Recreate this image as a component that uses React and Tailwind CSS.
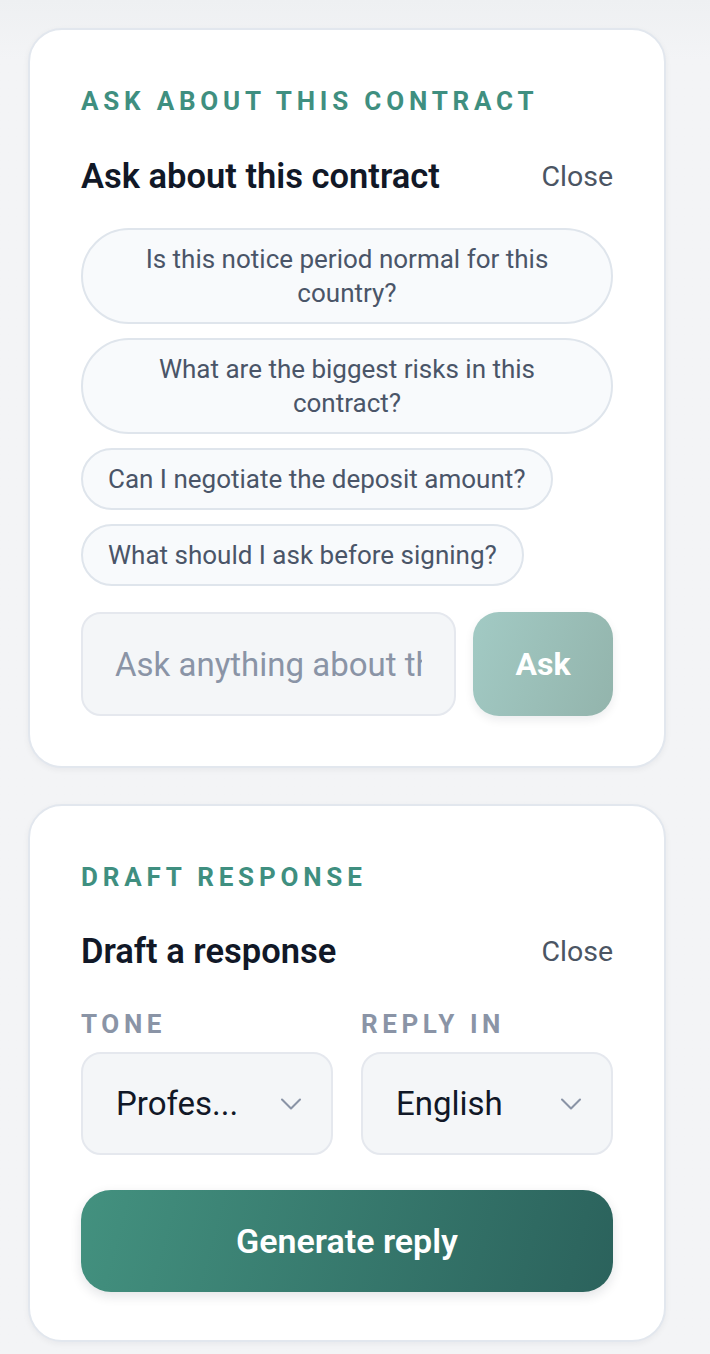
import React from "react";
import { ChevronDown } from "lucide-react";

const font = { fontFamily: "Roboto, 'Liberation Sans', sans-serif" };

function Chip({ children }) {
  return (
    <button className="max-w-full rounded-full border-2 border-[#dfe5ec] bg-[#f8fafc] px-[25px] py-[12px] text-center text-[26px] leading-[34px] text-[#4a5568]">
      {children}
    </button>
  );
}

function Select({ value }) {
  return (
    <div className="flex h-[103px] items-center justify-between rounded-[20px] border-2 border-[#e5e8ee] bg-[#f4f6f8] pl-[33px] pr-[22px]">
      <span className="text-[33px] text-[#111827]">{value}</span>
      <ChevronDown size={36} strokeWidth={1.4} className="text-[#8a94a6]" />
    </div>
  );
}

export default function App() {
  return (
    <div style={font} className="min-h-[1354px] w-[710px] bg-gradient-to-b from-[#eef0f2] to-[#f3f4f6] to-[60px] pt-[28px]">
      <div className="ml-[28px] w-[638px] flex flex-col gap-[36px]">
        <div className="rounded-[34px] border-2 border-[#e2e7ee] bg-white px-[51px] pt-[52px] pb-[50px] shadow-[0_2px_6px_rgba(15,23,42,0.05)]">
          <div className="text-[26px] font-bold leading-[39px] tracking-[4.8px] text-[#3f8f80]">ASK ABOUT THIS CONTRACT</div>
          <div className="mt-[32px] flex h-[48px] items-center justify-between">
            <span className="text-[34.5px] font-semibold text-[#111827]">Ask about this contract</span>
            <span className="text-[28.5px] text-[#4b5563]">Close</span>
          </div>
          <div className="mt-[27px] flex flex-col items-start gap-[14px]">
            <Chip>Is this notice period normal for this country?</Chip>
            <Chip>What are the biggest risks in this contract?</Chip>
            <Chip>Can I negotiate the deposit amount?</Chip>
            <Chip>What should I ask before signing?</Chip>
          </div>
          <div className="mt-[26px] flex gap-[17px]">
            <input
              style={font}
              className="h-[104px] min-w-0 flex-1 rounded-[20px] border-2 border-[#e5e8ee] bg-[#f4f6f8] px-[32px] text-[33px] text-[#111827] placeholder:text-[#8a94a6] outline-none"
              placeholder="Ask anything about this contract"
            />
            <button className="h-[104px] w-[140px] rounded-[26px] bg-linear-[110deg] from-[#a2cac4] to-[#93b4ac] text-[32px] font-bold text-white shadow-[0_4px_10px_rgba(15,23,42,0.08)]">
              Ask
            </button>
          </div>
        </div>

        <div className="rounded-[34px] border-2 border-[#e2e7ee] bg-white px-[51px] pt-[52px] pb-[48px] shadow-[0_2px_6px_rgba(15,23,42,0.05)]">
          <div className="text-[26px] font-bold leading-[39px] tracking-[4.8px] text-[#3f8f80]">DRAFT RESPONSE</div>
          <div className="mt-[31px] flex h-[48px] items-center justify-between">
            <span className="text-[34.5px] font-semibold text-[#111827]">Draft a response</span>
            <span className="text-[28.5px] text-[#4b5563]">Close</span>
          </div>
          <div className="mt-[29px] grid grid-cols-2 gap-x-[28px]">
            <div>
              <div className="text-[26px] font-bold leading-[39px] tracking-[4.6px] text-[#8a94a6]">TONE</div>
              <div className="mt-[8px]"><Select value="Profes..." /></div>
            </div>
            <div>
              <div className="text-[26px] font-bold leading-[39px] tracking-[4.6px] text-[#8a94a6]">REPLY IN</div>
              <div className="mt-[8px]"><Select value="English" /></div>
            </div>
          </div>
          <button className="mt-[35px] h-[102px] w-full rounded-[30px] bg-linear-[105deg] from-[#43917f] to-[#2b625c] text-[34px] font-semibold text-white shadow-[0_4px_12px_rgba(15,23,42,0.12)]">
            Generate reply
          </button>
        </div>
      </div>
    </div>
  );
}
